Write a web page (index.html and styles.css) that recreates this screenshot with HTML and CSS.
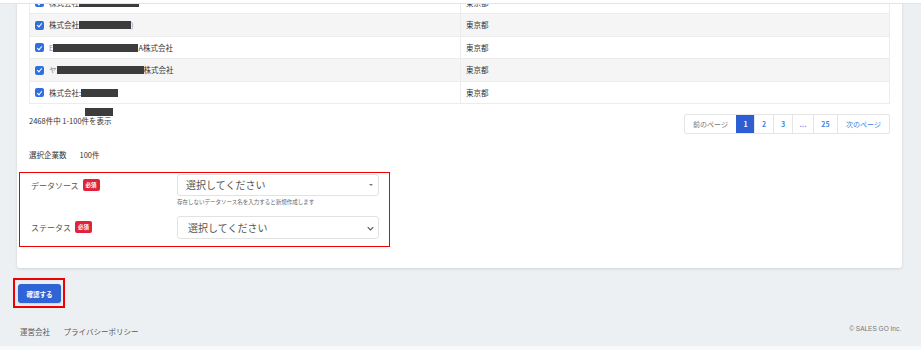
FILE: index.html
```html
<!DOCTYPE html>
<html lang="ja">
<head>
    <meta charset="UTF-8">
    <meta name="viewport" content="width=device-width, initial-scale=1.0">
    <title>企業選択</title>
    <link rel="stylesheet" href="styles.css">
</head>
<body>
<div class="top-bar"></div>

<main class="main">
    <section class="card">
        <table class="company-table">
            <tr>
                <td class="name-cell"><span class="check"></span>株式会社<span class="mask" style="width: 60px"></span></td>
                <td>東京都</td>
            </tr>
            <tr>
                <td class="name-cell"><span class="check"></span>株式会社<span class="mask" style="width: 52px"></span><span class="faint">)</span></td>
                <td>東京都</td>
            </tr>
            <tr>
                <td class="name-cell"><span class="check"></span><span class="faint">E</span><span class="mask" style="width: 85px"></span>A株式会社</td>
                <td>東京都</td>
            </tr>
            <tr>
                <td class="name-cell"><span class="check"></span><span class="faint">ヤ</span><span class="mask" style="width: 87px"></span>株式会社</td>
                <td>東京都</td>
            </tr>
            <tr>
                <td class="name-cell"><span class="check"></span>株式会社:<span class="mask" style="width: 37px"></span></td>
                <td>東京都</td>
            </tr>
        </table>

        <div class="list-footer">
            <div class="list-count">
                <span class="mask count-mask"></span>
                <p>2468件中 1-100件を表示</p>
            </div>
            <ul class="pager">
                <li class="prev">前のページ</li>
                <li class="active">1</li>
                <li>2</li>
                <li>3</li>
                <li class="dots">...</li>
                <li>25</li>
                <li class="next">次のページ</li>
            </ul>
        </div>

        <p class="selected-count">選択企業数<span>100件</span></p>

        <div class="form-box">
            <div class="form-row">
                <label class="form-label">データソース<span class="badge">必須</span></label>
                <div class="form-field">
                    <div class="select">選択してください<span class="caret"></span></div>
                    <p class="hint">存在しないデータソース名を入力すると新規作成します</p>
                </div>
            </div>
            <div class="form-row second">
                <label class="form-label">ステータス<span class="badge">必須</span></label>
                <div class="form-field">
                    <div class="select">選択してください
                        <svg class="chevron" viewBox="0 0 10 6" width="7" height="5"><path d="M1 1 L5 5 L9 1" fill="none" stroke="#555" stroke-width="1.6"/></svg>
                    </div>
                </div>
            </div>
        </div>
    </section>

    <div class="submit-box">
        <button class="submit-button">確認する</button>
    </div>

    <footer class="footer">
        <nav class="footer-links">
            <a href="#">運営会社</a>
            <a href="#">プライバシーポリシー</a>
        </nav>
        <span class="copyright">© SALES GO Inc.</span>
    </footer>
</main>
<div class="page-end"></div>
</body>
</html>
```

FILE: styles.css
```css
body {
    margin: 0;
    background-color: #edf0f3;
    font-family: "Noto Sans CJK JP", "Noto Sans", sans-serif;
    color: #333;
    height: 350px;
    overflow: hidden;
}

/* 上部の固定バー */
.top-bar {
    position: fixed;
    top: 0;
    left: 0;
    right: 0;
    height: 3px;
    background-color: #fff;
    border-bottom: 1px solid #e4e4e4;
    z-index: 10;
}

.main {
    padding: 0 19px 0 17px;
}

.card {
    background-color: #fff;
    padding: 0 12px 21px 12px;
    overflow: hidden;
    box-shadow: 0 1px 3px rgba(0, 0, 0, 0.12);
    border-radius: 0 0 3px 3px;
}

/* 企業一覧テーブル */
.company-table {
    width: 100%;
    margin-top: -9.5px;
    border-collapse: collapse;
    border: 1px solid #ececec;
    font-size: 7.5px;
}

.company-table tr {
    height: 22.5px;
}

.company-table tr:nth-child(even) {
    background-color: #f5f5f5;
}

.company-table td {
    padding: 0 5px;
    border-top: 1px solid #ececec;
    vertical-align: middle;
    white-space: nowrap;
}

.company-table .name-cell {
    width: 420px;
    border-right: 1px solid #ececec;
}

.check {
    display: inline-block;
    width: 9px;
    height: 9px;
    margin-right: 5px;
    vertical-align: -1.5px;
    border-radius: 2px;
    background-color: #2f6fe0;
    position: relative;
}

.check::after {
    content: "";
    position: absolute;
    left: 3px;
    top: 1.5px;
    width: 2px;
    height: 4px;
    border: solid #fff;
    border-width: 0 1.2px 1.2px 0;
    transform: rotate(40deg);
}

.mask {
    display: inline-block;
    height: 8px;
    vertical-align: -1px;
    background-color: #3c3c3c;
}

.faint {
    color: #888;
}

/* 件数とページネーション */
.list-footer {
    display: flex;
    justify-content: space-between;
    align-items: flex-start;
    margin-top: 4px;
}

.list-count p {
    margin: 0;
    font-size: 7.5px;
    line-height: 9px;
}

.count-mask {
    display: block;
    width: 28px;
    margin-left: 56px;
}

.pager {
    display: flex;
    list-style: none;
    margin: 6px 0 0 0;
    padding: 0;
    border: 1px solid #e6e6e6;
    border-radius: 2px;
    height: 18px;
    font-size: 7px;
    font-weight: bold;
}

.pager li {
    display: flex;
    align-items: center;
    justify-content: center;
    min-width: 17px;
    color: #3f82e8;
    border-left: 1px solid #e6e6e6;
}

.pager li:first-child {
    border-left: none;
}

.pager .prev {
    width: 51px;
    color: #777;
    font-weight: normal;
}

.pager .next {
    width: 51px;
    font-weight: normal;
}

.pager li:nth-child(3) { width: 18px; }
.pager li:nth-child(4) { width: 18px; }
.pager .dots { width: 20px; }
.pager li:nth-child(6) { width: 23px; }

.pager .active {
    background-color: #2d5fd3;
    color: #fff;
    border-color: #2d5fd3;
}

.selected-count {
    margin: 16px 0 0 0;
    font-size: 7.5px;
    line-height: 10px;
}

.selected-count span {
    margin-left: 13px;
}

/* 入力フォーム */
.form-box {
    width: 371px;
    box-sizing: border-box;
    margin: 12px 0 0 -10px;
    padding: 1px 0 7px 11px;
    border: 1.5px solid #f00000;
}

.form-row {
    display: flex;
}

.form-row.second {
    margin-top: 10px;
}

.form-label {
    width: 146px;
    height: 22px;
    display: flex;
    align-items: center;
    font-size: 8px;
    color: #555;
}

.badge {
    margin-left: 4px;
    padding: 0 3px;
    height: 12px;
    line-height: 12px;
    border-radius: 2px;
    background-color: #e0233a;
    color: #fff;
    font-size: 5.5px;
    font-weight: bold;
}

.form-field {
    width: 202px;
}

.select {
    position: relative;
    box-sizing: border-box;
    height: 22px;
    padding: 0 8px;
    border: 1px solid #e2e2e2;
    border-radius: 3px;
    font-size: 10px;
    line-height: 20px;
    color: #555;
}

.form-row.second .select {
    height: 23px;
    line-height: 21px;
    padding-left: 10px;
}

.caret {
    position: absolute;
    right: 5px;
    top: 9px;
    border-left: 2px solid transparent;
    border-right: 2px solid transparent;
    border-top: 2.5px solid #777;
}

.chevron {
    position: absolute;
    right: 4px;
    top: 9px;
}

.hint {
    margin: 2px 0 0 0;
    font-size: 5.5px;
    line-height: 8px;
    color: #666;
}

/* 確認ボタン */
.submit-box {
    width: fit-content;
    margin: 10px 0 0 -4px;
    padding: 4px 2px 3px 3px;
    border: 2px solid #f00000;
}

.submit-button {
    display: block;
    width: 43px;
    height: 19px;
    padding: 0;
    border: none;
    border-radius: 3px;
    background-color: #2f64d6;
    color: #fff;
    font-family: inherit;
    font-size: 6.5px;
    font-weight: bold;
    box-shadow: 0 1px 2px rgba(0, 0, 0, 0.15);
}

/* フッター */
.footer {
    display: flex;
    justify-content: space-between;
    align-items: center;
    margin-top: 15px;
    padding: 0 1px 0 3px;
    height: 10px;
}

.footer-links a {
    margin-right: 10px;
    font-size: 7.5px;
    color: #555;
    text-decoration: none;
}

.copyright {
    font-family: "Liberation Sans", sans-serif;
    font-size: 6.5px;
    color: #777;
}

.page-end {
    margin-top: 13px;
    height: 4px;
    background-color: #f7f8f9;
}
```
